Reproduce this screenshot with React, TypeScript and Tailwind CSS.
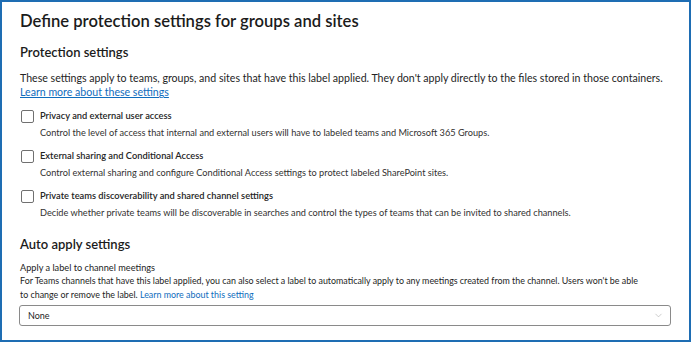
import React from 'react';
import { ChevronDown } from 'lucide-react';

const options = [
  {
    title: 'Privacy and external user access',
    description:
      'Control the level of access that internal and external users will have to labeled teams and Microsoft 365 Groups.',
  },
  {
    title: 'External sharing and Conditional Access',
    description: 'Control external sharing and configure Conditional Access settings to protect labeled SharePoint sites.',
  },
  {
    title: 'Private teams discoverability and shared channel settings',
    description:
      'Decide whether private teams will be discoverable in searches and control the types of teams that can be invited to shared channels.',
  },
];

const App = () => {
  return (
    <div className="w-[693px] h-[343px] bg-white font-['Lato',sans-serif] text-[#1b1b1b]">
      <div className="w-[691px] h-[342px] border-2 border-[#1e6db3] pl-[18px] pr-[19px] pt-[8px]">
        <h1 className="text-[16.6px] leading-[22px] font-semibold">Define protection settings for groups and sites</h1>

        <h2 className="mt-[11px] text-[13px] leading-[18px] font-semibold">Protection settings</h2>
        <p className="mt-[10px] text-[10.6px] leading-[14px] text-[#242424]">
          These settings apply to teams, groups, and sites that have this label applied. They don't apply directly to the
          files stored in those containers.
        </p>
        <a className="block text-[10.6px] leading-[14px] text-[#0f6cbd] underline">Learn more about these settings</a>

        <div className="mt-[10px] flex flex-col gap-[10px]">
          {options.map((opt, i) => (
            <div key={i} className="flex flex-col">
              <label className="flex items-center gap-[6px] h-[14px]">
                <span className="w-[13px] h-[13px] ml-[1px] border border-[#707070] rounded-[2px] bg-white"></span>
                <span className="text-[9.3px] font-semibold text-[#242424]">{opt.title}</span>
              </label>
              <p className="mt-[4px] pl-[20px] text-[9.2px] leading-[12px] text-[#323130]">{opt.description}</p>
            </div>
          ))}
        </div>

        <h2 className="mt-[16px] text-[13px] leading-[18px] font-semibold">Auto apply settings</h2>
        <div className="mt-[9px] text-[9.2px] leading-[12px] text-[#242424]">Apply a label to channel meetings</div>
        <p className="text-[8.9px] leading-[14px] text-[#242424]">
          For Teams channels that have this label applied, you can also select a label to automatically apply to any
          meetings created from the channel. Users won't be able
          <br />
          to change or remove the label. <a className="text-[#0f6cbd]">Learn more about this setting</a>
        </p>
        <div className="mt-[3px] h-[21px] w-[652px] -ml-[1px] border border-[#8a8a8a] rounded-[3px] flex items-center justify-between pl-[8px] pr-[6px]">
          <span className="text-[9px] text-[#242424]">None</span>
          <ChevronDown size={11} strokeWidth={1.25} className="text-[#a8a8a8]" />
        </div>
      </div>
    </div>
  );
};

export default App;
